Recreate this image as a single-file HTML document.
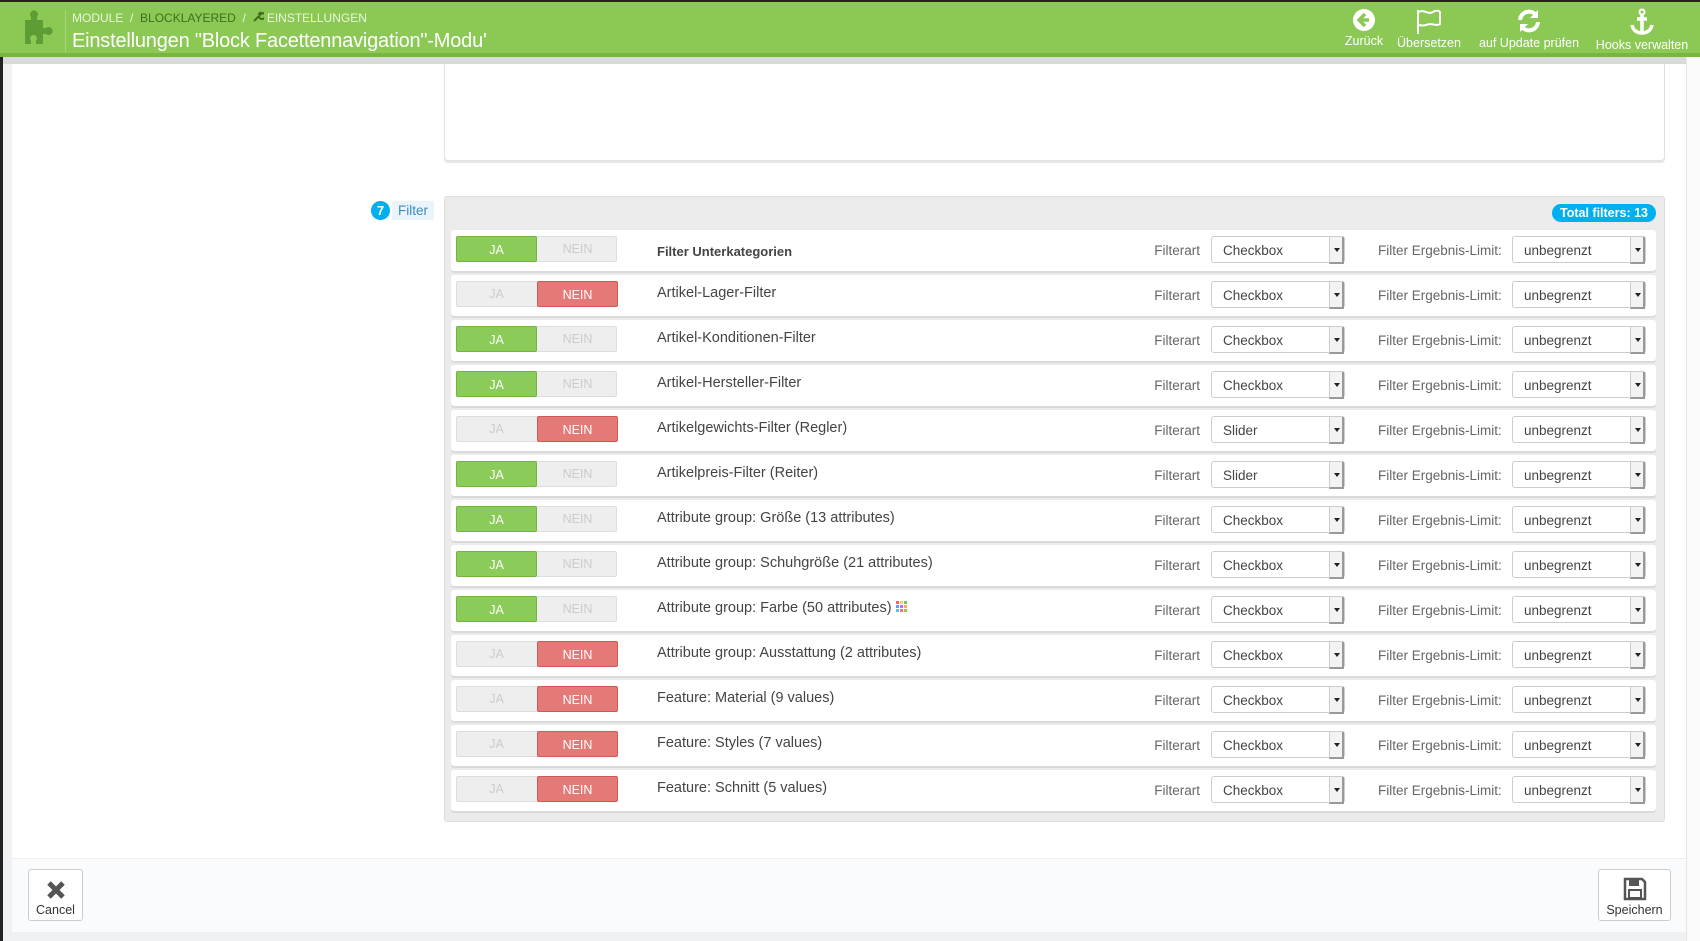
<!DOCTYPE html>
<html><head><meta charset="utf-8"><style>
*{box-sizing:border-box;margin:0;padding:0}
body{width:1700px;height:941px;overflow:hidden;background:#eff1f2;font-family:"Liberation Sans",sans-serif;position:relative;color:#555}
.leftbar{position:absolute;left:0;top:0;width:3px;height:941px;background:#222}
.header{position:absolute;left:0;top:0;width:1700px;height:57px;background:#8bc954;border-top:2px solid #222;border-bottom:4px solid #79b542}
.gstrip{position:absolute;left:3px;top:57px;width:1697px;height:7px;background:#d7d9da}
.puz{position:absolute;left:15px;top:8px}
.vsep{position:absolute;left:65px;top:8px;width:1px;height:42px;background:#a7d77d}
.bc{position:absolute;left:72px;top:9px;font-size:12px;color:#e9f6dd}
.bc span{color:#3f6e1d}
.title{position:absolute;left:72px;top:28px;font-size:20px;color:#fff;letter-spacing:-0.2px}
.tb{position:absolute;top:6px;text-align:center;color:#fff;font-size:12.5px}
.tb svg{display:block;margin:0 auto 2px}
.main{position:absolute;left:12px;top:64px;width:1674px;height:868px;background:#fff;border-bottom:2px solid #ddd}
.sb{position:absolute;left:1686px;top:57px;width:14px;height:884px;background:#fafafa;border-left:1px solid #e5e5e5}
.toppanel{position:absolute;left:444px;top:57px;width:1221px;height:104px;border:1px solid #e1e1e1;border-top:none;border-radius:0 0 4px 4px;box-shadow:0 2px 0 #e6e6e6}
.badge7{position:absolute;left:371px;top:201px;width:19px;height:19px;border-radius:50%;background:#00aff0;color:#fff;font-size:13px;font-weight:bold;text-align:center;line-height:19px}
.flbl{position:absolute;left:392px;top:201px;padding:2px 6px;background:#eaf4fb;color:#3c8dbc;font-size:13.5px}
.fpanel{position:absolute;left:444px;top:196px;width:1221px;height:626px;background:#ebebeb;border:1px solid #dcdcdc;border-radius:3px}
.total{position:absolute;left:1552px;top:204px;width:104px;height:18px;border-radius:9px;background:#00aff0;color:#fff;font-size:12.5px;font-weight:bold;text-align:center;line-height:18px}
.row{position:absolute;left:451px;width:1205px;height:41px;background:#fff;border-radius:3px;box-shadow:0 2px 0 #dadada}
.tg{position:absolute;left:5px;top:6px;width:161px;height:26px;border-radius:2px;background:#eee;border:1px solid #ddd}
.tg div{position:absolute;top:-1px;height:26px;width:81px;text-align:center;line-height:26px;font-size:12.5px;color:#ccc;border-radius:2px}
.tg .ja{left:-1px}.tg .ne{left:80px}
.tg .on.ja{background:#8bcb59;color:#fff;border:1px solid #72b63c}
.tg .on.ne{background:#e37a78;color:#fff;border:1px solid #d45755}
.lbl{position:absolute;left:206px;top:10px;font-size:14.5px;color:#444}
.fa{position:absolute;left:700px;top:13px;font-size:13.5px;color:#666;width:49px;text-align:right}
.sel{position:absolute;top:6px;width:134px;height:27px;border:1px solid #ccc;border-radius:3px;font-size:13.5px;color:#444;padding:6px 0 0 11px;background:#fff}
.sel:after{content:"";position:absolute;right:0;top:0;width:12px;height:25px;background:#f3f3f3;border-left:1px solid #ccc;border-right:2px solid #999;border-bottom:2px solid #999}
.sel:before{content:"";position:absolute;right:4px;top:11px;border:3px solid transparent;border-top:4px solid #222;z-index:2}
.lim{position:absolute;left:927px;top:13px;font-size:13.5px;color:#666}
.foot{position:absolute;left:12px;top:858px;width:1674px;height:74px;background:#fafbfc;border-top:1px solid #eee}
.btn{position:absolute;top:869px;height:52px;border:1px solid #ccc;border-radius:3px;background:#fff;text-align:center;font-size:12.5px;color:#333}
</style></head><body>
<div class="main"></div>
<div class="toppanel"></div>
<div class="leftbar"></div>
<div class="header">
<svg class="puz" width="40" height="38" viewBox="0 0 40 38"><path d="M10 10h6v-3a4 4 0 1 1 6 0v3h6v8h3a4 4 0 1 1 0 6h-3v10h-7v-3a3.5 3.5 0 1 0-5 0v3h-6z" fill="#5e9c35"/></svg>
<div class="vsep"></div>
<div class="bc">MODULE &nbsp;/&nbsp; <span>BLOCKLAYERED</span> &nbsp;/&nbsp; <svg width="11" height="11" viewBox="0 0 11 11"><path d="M1 10l5-5M6 5a3 3 0 1 0 3-3l-2 2-1-1 2-2" stroke="#3f6e1d" stroke-width="2" fill="none"/></svg> EINSTELLUNGEN</div>
<div class="title">Einstellungen "Block Facettennavigation"-Modu'</div>
<div class="tb" style="left:1341px;width:46px"><svg width="24" height="24" viewBox="0 0 24 24"><circle cx="12" cy="12" r="11" fill="#fff"/><path d="M13 6l-6 6 6 6M7 12h10" stroke="#8bc954" stroke-width="3.5" fill="none"/></svg>Zurück</div>
<div class="tb" style="left:1394px;width:70px"><svg width="28" height="26" viewBox="0 0 28 26"><path d="M3 2v24M4 4c5-3 9 3 14 0s7 0 7 0v12c-4 3-8-2-14 1-3 1-7 0-7 0" stroke="#fff" stroke-width="2" fill="none"/></svg>Übersetzen</div>
<div class="tb" style="left:1474px;width:110px"><svg width="26" height="26" viewBox="0 0 26 26"><path d="M4 12a9 9 0 0 1 16-5M22 14a9 9 0 0 1-16 5" stroke="#fff" stroke-width="4" fill="none"/><path d="M22 2v8h-8zM4 24v-8h8z" fill="#fff"/></svg>auf Update prüfen</div>
<div class="tb" style="left:1592px;width:100px"><svg width="26" height="28" viewBox="0 0 26 28"><circle cx="13" cy="4" r="2.5" stroke="#fff" stroke-width="2" fill="none"/><path d="M13 7v18M8 11h10M3 17c1 6 6 8 10 8s9-2 10-8" stroke="#fff" stroke-width="3.5" fill="none"/></svg>Hooks verwalten</div>
</div>
<div class="gstrip"></div>
<div class="sb"></div>
<div class="badge7">7</div><div class="flbl">Filter</div>
<div class="fpanel"></div>
<div class="total">Total filters: 13</div>

<div class="row" style="top:230px"><div class="tg"><div class="ja on">JA</div><div class="ne">NEIN</div></div><div class="lbl" style="top:14px;font-weight:bold;font-size:13px">Filter Unterkategorien</div><div class="fa">Filterart</div><div class="sel" style="left:760px">Checkbox</div><div class="lim">Filter Ergebnis-Limit:</div><div class="sel" style="left:1061px">unbegrenzt</div></div>
<div class="row" style="top:275px"><div class="tg"><div class="ja">JA</div><div class="ne on">NEIN</div></div><div class="lbl">Artikel-Lager-Filter</div><div class="fa">Filterart</div><div class="sel" style="left:760px">Checkbox</div><div class="lim">Filter Ergebnis-Limit:</div><div class="sel" style="left:1061px">unbegrenzt</div></div>
<div class="row" style="top:320px"><div class="tg"><div class="ja on">JA</div><div class="ne">NEIN</div></div><div class="lbl">Artikel-Konditionen-Filter</div><div class="fa">Filterart</div><div class="sel" style="left:760px">Checkbox</div><div class="lim">Filter Ergebnis-Limit:</div><div class="sel" style="left:1061px">unbegrenzt</div></div>
<div class="row" style="top:365px"><div class="tg"><div class="ja on">JA</div><div class="ne">NEIN</div></div><div class="lbl">Artikel-Hersteller-Filter</div><div class="fa">Filterart</div><div class="sel" style="left:760px">Checkbox</div><div class="lim">Filter Ergebnis-Limit:</div><div class="sel" style="left:1061px">unbegrenzt</div></div>
<div class="row" style="top:410px"><div class="tg"><div class="ja">JA</div><div class="ne on">NEIN</div></div><div class="lbl">Artikelgewichts-Filter (Regler)</div><div class="fa">Filterart</div><div class="sel" style="left:760px">Slider</div><div class="lim">Filter Ergebnis-Limit:</div><div class="sel" style="left:1061px">unbegrenzt</div></div>
<div class="row" style="top:455px"><div class="tg"><div class="ja on">JA</div><div class="ne">NEIN</div></div><div class="lbl">Artikelpreis-Filter (Reiter)</div><div class="fa">Filterart</div><div class="sel" style="left:760px">Slider</div><div class="lim">Filter Ergebnis-Limit:</div><div class="sel" style="left:1061px">unbegrenzt</div></div>
<div class="row" style="top:500px"><div class="tg"><div class="ja on">JA</div><div class="ne">NEIN</div></div><div class="lbl">Attribute group: Größe (13 attributes)</div><div class="fa">Filterart</div><div class="sel" style="left:760px">Checkbox</div><div class="lim">Filter Ergebnis-Limit:</div><div class="sel" style="left:1061px">unbegrenzt</div></div>
<div class="row" style="top:545px"><div class="tg"><div class="ja on">JA</div><div class="ne">NEIN</div></div><div class="lbl">Attribute group: Schuhgröße (21 attributes)</div><div class="fa">Filterart</div><div class="sel" style="left:760px">Checkbox</div><div class="lim">Filter Ergebnis-Limit:</div><div class="sel" style="left:1061px">unbegrenzt</div></div>
<div class="row" style="top:590px"><div class="tg"><div class="ja on">JA</div><div class="ne">NEIN</div></div><div class="lbl">Attribute group: Farbe (50 attributes) <svg width="11" height="11" viewBox="0 0 11 11"><rect x="0" y="0" width="3" height="3" fill="#e66"/><rect x="4" y="0" width="3" height="3" fill="#fc6"/><rect x="8" y="0" width="3" height="3" fill="#6c6"/><rect x="0" y="4" width="3" height="3" fill="#69f"/><rect x="4" y="4" width="3" height="3" fill="#c6f"/><rect x="8" y="4" width="3" height="3" fill="#fa5"/><rect x="0" y="8" width="3" height="3" fill="#5cc"/><rect x="4" y="8" width="3" height="3" fill="#f69"/><rect x="8" y="8" width="3" height="3" fill="#9c3"/></svg></div><div class="fa">Filterart</div><div class="sel" style="left:760px">Checkbox</div><div class="lim">Filter Ergebnis-Limit:</div><div class="sel" style="left:1061px">unbegrenzt</div></div>
<div class="row" style="top:635px"><div class="tg"><div class="ja">JA</div><div class="ne on">NEIN</div></div><div class="lbl">Attribute group: Ausstattung (2 attributes)</div><div class="fa">Filterart</div><div class="sel" style="left:760px">Checkbox</div><div class="lim">Filter Ergebnis-Limit:</div><div class="sel" style="left:1061px">unbegrenzt</div></div>
<div class="row" style="top:680px"><div class="tg"><div class="ja">JA</div><div class="ne on">NEIN</div></div><div class="lbl">Feature: Material (9 values)</div><div class="fa">Filterart</div><div class="sel" style="left:760px">Checkbox</div><div class="lim">Filter Ergebnis-Limit:</div><div class="sel" style="left:1061px">unbegrenzt</div></div>
<div class="row" style="top:725px"><div class="tg"><div class="ja">JA</div><div class="ne on">NEIN</div></div><div class="lbl">Feature: Styles (7 values)</div><div class="fa">Filterart</div><div class="sel" style="left:760px">Checkbox</div><div class="lim">Filter Ergebnis-Limit:</div><div class="sel" style="left:1061px">unbegrenzt</div></div>
<div class="row" style="top:770px"><div class="tg"><div class="ja">JA</div><div class="ne on">NEIN</div></div><div class="lbl">Feature: Schnitt (5 values)</div><div class="fa">Filterart</div><div class="sel" style="left:760px">Checkbox</div><div class="lim">Filter Ergebnis-Limit:</div><div class="sel" style="left:1061px">unbegrenzt</div></div>

<div class="foot"></div>
<div class="btn" style="left:28px;width:55px"><svg width="22" height="22" viewBox="0 0 22 22" style="display:block;margin:9px auto 2px"><path d="M4 4l14 14M18 4L4 18" stroke="#555" stroke-width="5"/></svg>Cancel</div>
<div class="btn" style="left:1598px;width:73px"><svg width="24" height="24" viewBox="0 0 24 24" style="display:block;margin:7px auto 2px"><path d="M2 2h17l3 3v17H2z" stroke="#555" stroke-width="2.5" fill="none"/><rect x="6" y="3" width="10" height="6" fill="#555"/><rect x="6" y="13" width="12" height="8" stroke="#555" stroke-width="2" fill="none"/></svg>Speichern</div>
</body></html>
